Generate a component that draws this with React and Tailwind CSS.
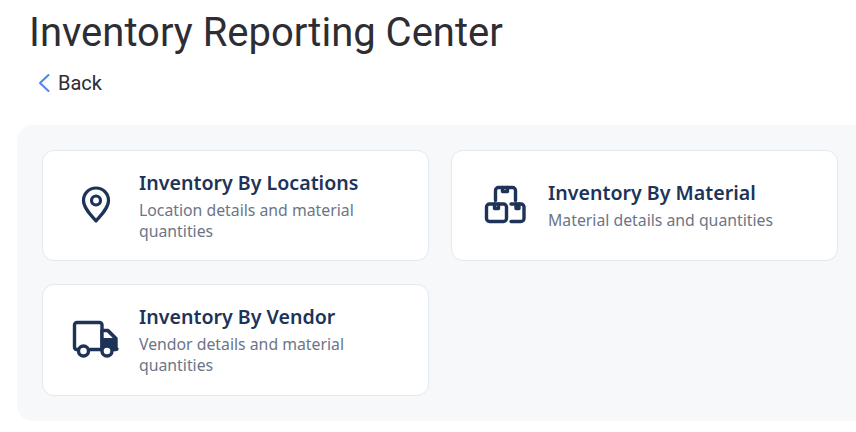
const cards = [
  { title: 'Inventory By Locations', desc: 'Location details and material quantities', icon: <PinIcon /> },
  { title: 'Inventory By Material', desc: 'Material details and quantities', icon: <BoxesIcon /> },
  { title: 'Inventory By Vendor', desc: 'Vendor details and material quantities', icon: <TruckIcon /> },
]

function PinIcon() {
  return (
    <svg width="48" height="48" viewBox="0 0 48 48" fill="none" stroke="#1e3358" strokeWidth="3.2" strokeLinejoin="round">
      <path d="M24 39C19 33 11.500 26 11.500 18.500 11.500 11.500 17 6 24 6s12.500 5.500 12.500 12.500C36.500 26 29 33 24 39z" />
      <circle cx="24" cy="18.500" r="4.500" />
    </svg>
  )
}

function BoxesIcon() {
  return (
    <svg width="48" height="48" viewBox="0 0 48 48" fill="none" stroke="#1e3358" strokeWidth="3.4" strokeLinejoin="round" strokeLinecap="round">
      <path d="M14.500 18.500V8.500a3 3 0 0 1 3-3h14a3 3 0 0 1 3 3v10" />
      <path d="M21.500 5.500v4h5v-4" />
      <path d="M8.500 22h14a3 3 0 0 1 3 3v11.500a3 3 0 0 1-3 3h-14a3 3 0 0 1-3-3V25a3 3 0 0 1 3-3z" />
      <path d="M13.500 22v4.500h4V22" />
      <path d="M30 22h10a3 3 0 0 1 3 3v11.500a3 3 0 0 1-3 3H30" />
      <path d="M35 22v4.500h3V22" />
    </svg>
  )
}

function TruckIcon() {
  return (
    <svg width="48" height="48" viewBox="0 0 48 48" fill="none" stroke="#1e3358" strokeWidth="3.4" strokeLinejoin="round" strokeLinecap="round">
      <path d="M6 33.500H4.500A2.500 2.500 0 0 1 2.500 31V9A2.500 2.500 0 0 1 5 6.500H27.500A2.500 2.500 0 0 1 30 9v24.500H18" />
      <path d="M30 14.500H36l8 8V33.500H30z" fill="#1e3358" />
      <path d="M31.700 16.200h3.300l5.800 5.800H31.700z" fill="#fff" stroke="none" />
      <path d="M44 33h1" />
      <circle cx="11.500" cy="35" r="5" fill="#fff" />
      <circle cx="35" cy="35" r="5" fill="#fff" />
    </svg>
  )
}

function ReportCard({ title, desc, icon }) {
  return (
    <div className="flex items-center min-h-[111.3px] rounded-xl border border-[#e2e8f0] bg-white pl-[29px]">
      <div className="mr-[19px] shrink-0">{icon}</div>
      <div className="min-w-0 flex-1 pr-6 pt-[0.6px]">
        <div className="text-[19.6px] leading-[26px] font-semibold text-[#1e3358]">{title}</div>
        <p className="mt-[4px] text-[15.8px] leading-[21px] text-[#6b7588]">{desc}</p>
      </div>
    </div>
  )
}

export default function App() {
  return (
    <div className="h-[432px] w-[856px] overflow-hidden bg-white font-['Roboto',sans-serif]">
      <h1 className="pl-[29px] pt-[11px] text-[40px] leading-[44px] font-normal text-[#2d2d33]">Inventory Reporting Center</h1>
      <div className="flex items-center pl-[38px] pt-[8px] text-[20px] leading-[40px] text-[#2d2d33]">
        <svg width="12" height="20" viewBox="0 0 12 20" fill="none" stroke="#4f85f0" strokeWidth="2" strokeLinecap="round" strokeLinejoin="round">
          <path d="M10.500 2 2 10l8.500 8" />
        </svg>
        <span className="ml-[8px]">Back</span>
      </div>
      <div className="mt-[22px] ml-[17px] w-[860px] rounded-2xl bg-[#f7f8fa] pl-[25px] py-[25px] font-['Noto_Sans',sans-serif]">
        <div className="grid w-[796px] grid-cols-2 gap-x-[22px] gap-y-[23px]">
          {cards.map(c => <ReportCard key={c.title} {...c} />)}
        </div>
      </div>
    </div>
  )
}
